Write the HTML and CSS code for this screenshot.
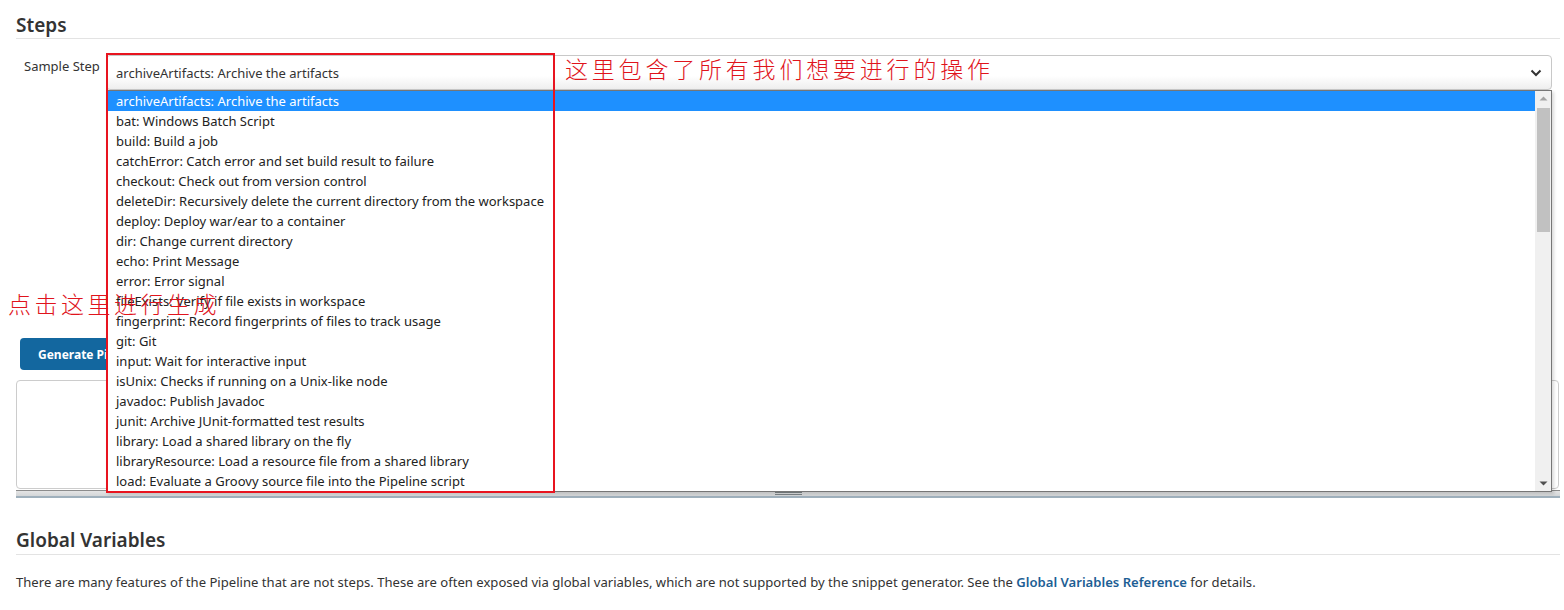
FILE: index.html
```html
<!DOCTYPE html>
<html>
<head>
<meta charset="utf-8">
<link rel="stylesheet" href="styles.css">
</head>
<body>
<div class="page">
  <h2 class="section-title">Steps</h2>
  <div class="step-row">
    <label class="step-label">Sample Step</label>
    <div class="select-wrap">
      <div class="select-box">
        <span>archiveArtifacts: Archive the artifacts</span>
        <svg class="chev" width="12" height="8" viewBox="0 0 12 8"><path d="M1.5 1.5 L6 6 L10.5 1.5" fill="none" stroke="#333" stroke-width="2"/></svg>
      </div>
      <div class="dropdown">
        <ul class="options">
          <li class="selected">archiveArtifacts: Archive the artifacts</li>
          <li>bat: Windows Batch Script</li>
          <li>build: Build a job</li>
          <li>catchError: Catch error and set build result to failure</li>
          <li>checkout: Check out from version control</li>
          <li>deleteDir: Recursively delete the current directory from the workspace</li>
          <li>deploy: Deploy war/ear to a container</li>
          <li>dir: Change current directory</li>
          <li>echo: Print Message</li>
          <li>error: Error signal</li>
          <li>fileExists: Verify if file exists in workspace</li>
          <li>fingerprint: Record fingerprints of files to track usage</li>
          <li>git: Git</li>
          <li>input: Wait for interactive input</li>
          <li>isUnix: Checks if running on a Unix-like node</li>
          <li>javadoc: Publish Javadoc</li>
          <li>junit: Archive JUnit-formatted test results</li>
          <li>library: Load a shared library on the fly</li>
          <li>libraryResource: Load a resource file from a shared library</li>
          <li>load: Evaluate a Groovy source file into the Pipeline script</li>
        </ul>
        <div class="scrollbar">
          <svg class="arrow" width="15" height="15" viewBox="0 0 15 15"><path d="M3.5 9.5 L7.5 5.5 L11.5 9.5 Z" fill="#a3a3a3"/></svg>
          <div class="thumb"></div>
          <div class="track-fill"></div>
          <svg class="arrow" width="15" height="15" viewBox="0 0 15 15"><path d="M3.5 5.5 L7.5 9.5 L11.5 5.5 Z" fill="#505050"/></svg>
        </div>
      </div>
      <div class="note-box"></div>
    </div>
    <div class="note note-top">这里包含了所有我们想要进行的操作</div>
  </div>
  <div class="note-left">点击这里进行生成</div>
  <button class="gen-btn">Generate Pipeline Script</button>
  <div class="textarea-wrap">
    <div class="textarea"></div>
    <div class="resize-bar"><span class="grip"></span></div>
  </div>
  <h2 class="section-title gv-title">Global Variables</h2>
  <p class="gv-text">There are many features of the Pipeline that are not steps. These are often exposed via global variables, which are not supported by the snippet generator. See the <a href="#">Global Variables Reference</a> for details.</p>
</div>
</body>
</html>
```
FILE: styles.css
```css
* { box-sizing: border-box; }
html, body { margin: 0; padding: 0; background: #fff; }
body {
  font-family: "Segoe UI", "Noto Sans", "Open Sans", sans-serif;
  color: #333;
  width: 1564px;
  height: 610px;
  overflow: hidden;
}
.page {
  position: relative;
  padding: 0 4px 0 16px;
}
.section-title {
  margin: 0;
  padding-top: 14px;
  padding-bottom: 2px;
  font-size: 19px;
  line-height: 22px;
  font-weight: 600;
  color: #333;
  border-bottom: 1px solid #e3e3e3;
}
.step-row {
  position: relative;
  display: flex;
  align-items: flex-start;
  margin-top: 16px;
  padding-left: 8px;
}
.step-label {
  width: 82px;
  font-size: 13px;
  line-height: 20px;
  padding-top: 1px;
}
.select-wrap {
  position: relative;
  width: 1446px;
}
.select-box {
  height: 35px;
  border: 1px solid #c8c8c8;
  border-radius: 4px;
  background: linear-gradient(#fff 60%, #eee);
  display: flex;
  align-items: center;
  justify-content: space-between;
  padding: 0 9px 0 9px;
  font-size: 13px;
  color: #333;
}
.select-box span { padding-top: 1px; }
.chev { margin-top: 1px; }
.dropdown {
  position: absolute;
  top: 35px;
  left: 0;
  width: 1446px;
  height: 402px;
  border: 1px solid #767676;
  background: #fff;
  display: flex;
  box-shadow: 2px 2px 3px rgba(0,0,0,0.15);
  z-index: 5;
}
.options {
  list-style: none;
  margin: 0;
  padding: 0;
  flex: 1;
}
.options li {
  height: 20px;
  line-height: 20px;
  padding-left: 9px;
  font-size: 13px;
  color: #222;
  white-space: nowrap;
}
.options li.selected {
  background: #1e90ff;
  color: #fff;
}
.scrollbar {
  width: 16px;
  background: #f0f0f0;
  display: flex;
  flex-direction: column;
  align-items: center;
}
.arrow { display: block; flex: none; }
.thumb {
  width: 13px;
  height: 124px;
  background: #c1c1c1;
  margin-top: 2px;
}
.track-fill { flex: 1; }
.note-box {
  position: absolute;
  top: -2px;
  left: 0;
  width: 449px;
  height: 440px;
  border: 2px solid #e8141f;
  z-index: 6;
  pointer-events: none;
}
.note {
  position: absolute;
  font-family: "Noto Sans CJK SC", sans-serif;
  font-weight: 300;
  color: #e0141c;
  font-size: 23px;
  letter-spacing: 3.8px;
  z-index: 7;
  white-space: nowrap;
}
.note-top {
  left: 549px;
  top: -2px;
  line-height: 30px;
}
.note-left {
  position: absolute;
  left: 8px;
  top: 288px;
  font-family: "Noto Sans CJK SC", sans-serif;
  font-weight: 300;
  color: #e0141c;
  font-size: 23px;
  letter-spacing: 3.5px;
  line-height: 30px;
  z-index: 7;
  white-space: nowrap;
}
.gen-btn {
  display: block;
  margin: 248px 0 0 4px;
  height: 32px;
  padding: 0 18px;
  border: none;
  border-radius: 4px;
  background: #13679f;
  color: #fff;
  font-family: "Segoe UI", "Noto Sans", sans-serif;
  font-weight: 700;
  font-size: 12px;
}
.textarea-wrap {
  margin-top: 10px;
}
.textarea {
  height: 109px;
  width: 1543px;
  border: 1px solid #ccc;
  border-radius: 4px;
  background: #fff;
}
.resize-bar {
  margin-top: 1px;
  height: 8px;
  width: 1544px;
  border-top: 1px solid #8c8c8c;
  border-bottom: 2px solid #9fb0bc;
  background: linear-gradient(#e4e4e4, #d3d6d8);
  display: flex;
  justify-content: center;
  align-items: center;
}
.grip {
  width: 27px;
  height: 3px;
  border-top: 1px solid #7d8487;
  border-bottom: 1px solid #7d8487;
}
.gv-title {
  margin-top: 29px;
  padding-top: 2px;
  padding-bottom: 3px;
}
.gv-text {
  margin: 17px 0 0 0;
  font-size: 13.1px;
  line-height: 20px;
  color: #333;
}
.gv-text a {
  color: #1d5e94;
  font-weight: 600;
  text-decoration: none;
}
```
